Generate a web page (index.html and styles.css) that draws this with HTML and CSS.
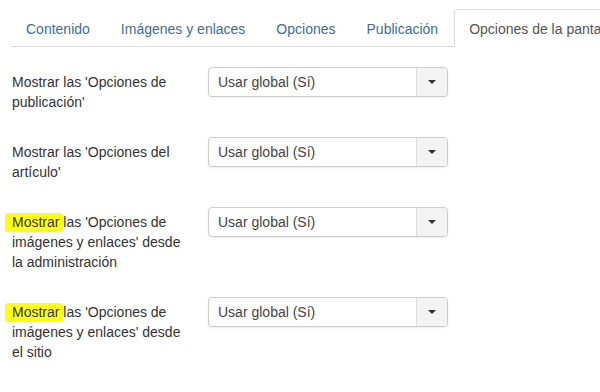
FILE: index.html
```html
<!DOCTYPE html>
<html lang="es">
<head>
<meta charset="utf-8">
<title>Opciones</title>
<link rel="stylesheet" href="styles.css">
</head>
<body>
<div class="page">
  <ul class="tabs">
    <li class="tab"><a>Contenido</a></li>
    <li class="tab"><a>Imágenes y enlaces</a></li>
    <li class="tab"><a>Opciones</a></li>
    <li class="tab"><a>Publicación</a></li>
    <li class="tab active"><a>Opciones de la pantalla de edición</a></li>
  </ul>
  <div class="form">
    <div class="row">
      <label class="lbl">Mostrar las 'Opciones de publicación'</label>
      <div class="select"><span class="val">Usar global (Sí)</span><span class="btn"><span class="caret"></span></span></div>
    </div>
    <div class="row">
      <label class="lbl">Mostrar las 'Opciones del artículo'</label>
      <div class="select"><span class="val">Usar global (Sí)</span><span class="btn"><span class="caret"></span></span></div>
    </div>
    <div class="row">
      <label class="lbl"><mark class="hl">Mostrar </mark>las 'Opciones de imágenes y enlaces' desde la administración</label>
      <div class="select"><span class="val">Usar global (Sí)</span><span class="btn"><span class="caret"></span></span></div>
    </div>
    <div class="row">
      <label class="lbl"><mark class="hl">Mostrar </mark>las 'Opciones de imágenes y enlaces' desde el sitio</label>
      <div class="select"><span class="val">Usar global (Sí)</span><span class="btn"><span class="caret"></span></span></div>
    </div>
  </div>
</div>
</body>
</html>
```
FILE: styles.css
```css
html, body {
  margin: 0;
  padding: 0;
  background: #fff;
  overflow: hidden;
}
body {
  font-family: "Liberation Sans", Arial, sans-serif;
  font-size: 14px;
  line-height: 20px;
  color: #333;
}
.page {
  padding: 9px 0 0 11px;
}
.tabs {
  display: flex;
  flex-wrap: nowrap;
  margin: 0;
  padding: 0;
  list-style: none;
  border-bottom: 1px solid #ddd;
  white-space: nowrap;
}
.tab {
  flex-shrink: 0;
  margin-right: 1px;
  margin-bottom: -1px;
}
.tab a {
  display: block;
  padding: 9px 14px 7px 14px;
  line-height: 20px;
  border: 1px solid transparent;
  border-radius: 4px 4px 0 0;
  color: #3d6e98;
}
.tab.active a {
  color: #555;
  background: #fff;
  border-color: #ddd;
  border-bottom-color: #fff;
}
.form {
  padding-top: 20px;
  padding-left: 1px;
}
.row {
  display: flex;
  align-items: flex-start;
  margin-bottom: 25px;
}
.lbl {
  width: 180px;
  padding-top: 5px;
  padding-left: 0;
  margin-right: 16px;
  flex-shrink: 0;
}
.hl {
  color: inherit;
  background: #ffff14;
  padding: 1px 0 2px 7px;
  margin-left: -7px;
  border-radius: 3px;
}
.select {
  display: flex;
  width: 240px;
  height: 30px;
  box-sizing: border-box;
  border: 1px solid #ccc;
  border-radius: 4px;
  box-shadow: 0 1px 2px rgba(0,0,0,0.08);
  background: #fff;
  overflow: hidden;
}
.val {
  flex: 1;
  padding-left: 9px;
  line-height: 28px;
  color: #444;
}
.btn {
  width: 30px;
  border-left: 1px solid #ddd;
  background: #f3f3f3;
  display: flex;
  align-items: center;
  justify-content: center;
}
.caret {
  width: 0;
  height: 0;
  border-left: 4px solid transparent;
  border-right: 4px solid transparent;
  border-top: 4px solid #333;
}
```
